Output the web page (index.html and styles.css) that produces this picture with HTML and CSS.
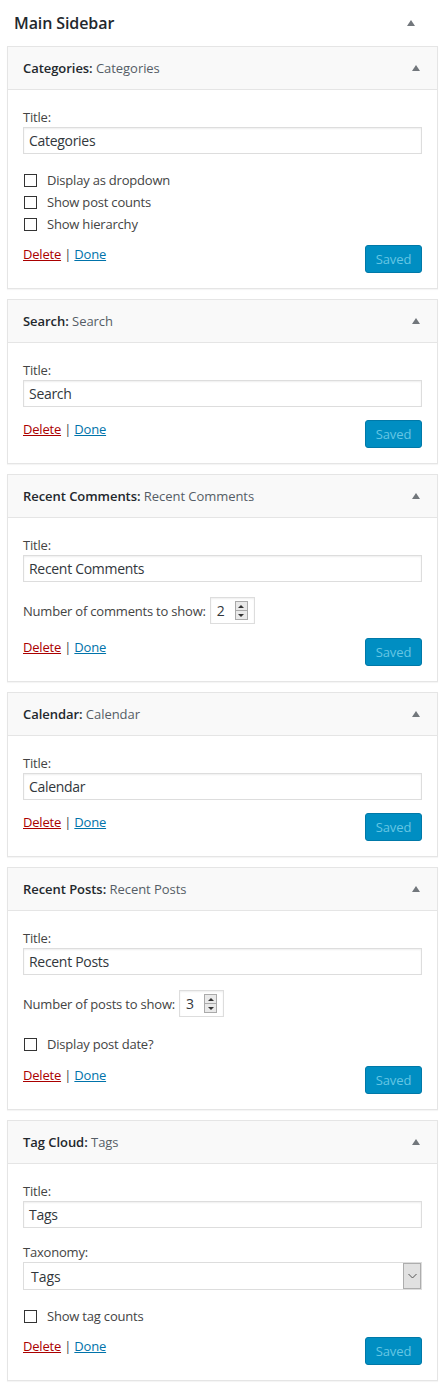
FILE: index.html
```html
<!DOCTYPE html>
<html>
<head>
<meta charset="utf-8">
<link rel="stylesheet" href="styles.css">
</head>
<body>
<div class="sidebar">
  <div class="sidebar-name">
    <h2>Main Sidebar</h2>
    <span class="arrow"></span>
  </div>

  <div class="widget">
    <div class="widget-top"><h3>Categories: <span class="in-title">Categories</span></h3><span class="arrow"></span></div>
    <div class="widget-inside">
      <label class="lbl">Title:</label>
      <div class="text-input">Categories</div>
      <div class="checks">
        <div class="check"><span class="box"></span><span>Display as dropdown</span></div>
        <div class="check"><span class="box"></span><span>Show post counts</span></div>
        <div class="check"><span class="box"></span><span>Show hierarchy</span></div>
      </div>
      <div class="actions after-checks"><div class="links"><a class="del">Delete</a> | <a class="done">Done</a></div><span class="saved">Saved</span></div>
    </div>
  </div>

  <div class="widget">
    <div class="widget-top"><h3>Search: <span class="in-title">Search</span></h3><span class="arrow"></span></div>
    <div class="widget-inside">
      <label class="lbl">Title:</label>
      <div class="text-input">Search</div>
      <div class="actions"><div class="links"><a class="del">Delete</a> | <a class="done">Done</a></div><span class="saved">Saved</span></div>
    </div>
  </div>

  <div class="widget">
    <div class="widget-top"><h3>Recent Comments: <span class="in-title">Recent Comments</span></h3><span class="arrow"></span></div>
    <div class="widget-inside">
      <label class="lbl">Title:</label>
      <div class="text-input">Recent Comments</div>
      <div class="number-row"><span>Number of comments to show:</span><span class="num">2<span class="spin"><span class="up"></span><span class="down"></span></span></span></div>
      <div class="actions after-number"><div class="links"><a class="del">Delete</a> | <a class="done">Done</a></div><span class="saved">Saved</span></div>
    </div>
  </div>

  <div class="widget">
    <div class="widget-top"><h3>Calendar: <span class="in-title">Calendar</span></h3><span class="arrow"></span></div>
    <div class="widget-inside">
      <label class="lbl">Title:</label>
      <div class="text-input">Calendar</div>
      <div class="actions"><div class="links"><a class="del">Delete</a> | <a class="done">Done</a></div><span class="saved">Saved</span></div>
    </div>
  </div>

  <div class="widget">
    <div class="widget-top"><h3>Recent Posts: <span class="in-title">Recent Posts</span></h3><span class="arrow"></span></div>
    <div class="widget-inside">
      <label class="lbl">Title:</label>
      <div class="text-input">Recent Posts</div>
      <div class="number-row"><span>Number of posts to show:</span><span class="num">3<span class="spin"><span class="up"></span><span class="down"></span></span></span></div>
      <div class="checks after-number">
        <div class="check"><span class="box"></span><span>Display post date?</span></div>
      </div>
      <div class="actions after-checks loose"><div class="links"><a class="del">Delete</a> | <a class="done">Done</a></div><span class="saved">Saved</span></div>
    </div>
  </div>

  <div class="widget">
    <div class="widget-top"><h3>Tag Cloud: <span class="in-title">Tags</span></h3><span class="arrow"></span></div>
    <div class="widget-inside">
      <label class="lbl">Title:</label>
      <div class="text-input">Tags</div>
      <label class="lbl second">Taxonomy:</label>
      <div class="select"><span>Tags</span><span class="dd"><svg width="9" height="6" viewBox="0 0 9 6"><path d="M0.5 1 L4.5 5 L8.5 1" fill="none" stroke="#555" stroke-width="1"/></svg></span></div>
      <div class="checks">
        <div class="check"><span class="box"></span><span>Show tag counts</span></div>
      </div>
      <div class="actions after-checks"><div class="links"><a class="del">Delete</a> | <a class="done">Done</a></div><span class="saved">Saved</span></div>
    </div>
  </div>
</div>
</body>
</html>
```

FILE: styles.css
```css
* { box-sizing: border-box; }
html, body { margin: 0; padding: 0; background: #fff; }
body {
  font-family: "Open Sans", "Noto Sans", sans-serif;
  font-size: 13px;
  color: #444;
}
.sidebar { padding: 0 6px 0 7px; }
.sidebar-name {
  display: flex;
  align-items: center;
  justify-content: space-between;
  height: 46px;
  padding: 0 23px 1px 7px;
}
.sidebar-name h2 {
  margin: 0;
  font-size: 16px;
  font-weight: 600;
  color: #23282d;
  letter-spacing: -0.1px;
}
.arrow {
  width: 0; height: 0;
  border-left: 4px solid transparent;
  border-right: 4px solid transparent;
  border-bottom: 6px solid #72777c;
}
.widget {
  border: 1px solid #e5e5e5;
  box-shadow: 0 1px 1px rgba(0,0,0,0.04);
  background: #fff;
  margin-bottom: 10px;
}
.widget-top {
  height: 43px;
  background: #f9f9f9;
  border-bottom: 1px solid #e5e5e5;
  display: flex;
  align-items: center;
  justify-content: space-between;
  padding: 0 17px 0 15px;
}
.widget-top h3 {
  margin: 0;
  font-size: 13px;
  font-weight: 600;
  color: #23282d;
  letter-spacing: -0.05px;
}
.in-title { font-weight: 400; color: #555d66; }
.widget-inside {
  padding: 18px 15px 15px;
  display: flex;
  flex-direction: column;
}
.lbl {
  display: block;
  height: 19px;
  line-height: 18px;
  letter-spacing: -0.2px;
}
.lbl.second { margin-top: 15px; }
.text-input {
  height: 27px;
  border: 1px solid #ddd;
  box-shadow: inset 0 1px 2px rgba(0,0,0,0.07);
  padding: 0 5px;
  font-size: 14px;
  line-height: 25px;
  color: #32373c;
  letter-spacing: -0.3px;
}
.checks { margin-top: 15px; display: flex; flex-direction: column; }
.check {
  height: 22px;
  display: flex;
  align-items: center;
  letter-spacing: -0.2px;
}
.box {
  width: 13px; height: 13px;
  border: 1px solid #333;
  margin: 0 10px 0 1px;
  flex: none;
}
.number-row {
  margin-top: 15px;
  display: flex;
  align-items: center;
  gap: 4px;
  letter-spacing: -0.2px;
}
.num {
  width: 45px; height: 27px;
  border: 1px solid #ddd;
  box-shadow: inset 0 1px 2px rgba(0,0,0,0.07);
  display: flex;
  align-items: center;
  justify-content: space-between;
  padding: 0 6px 0 6px;
  font-size: 14px;
  color: #32373c;
}
.spin {
  display: flex; flex-direction: column;
  width: 13px; height: 19px;
  border: 1px solid #aaa;
  background: #e9e9e9;
}
.spin .up, .spin .down {
  flex: 1;
  display: flex; align-items: center; justify-content: center;
}
.spin .up { border-bottom: 1px solid #aaa; }
.spin .up::after {
  content: ""; width: 0; height: 0;
  border-left: 3px solid transparent; border-right: 3px solid transparent;
  border-bottom: 3px solid #333;
}
.spin .down::after {
  content: ""; width: 0; height: 0;
  border-left: 3px solid transparent; border-right: 3px solid transparent;
  border-top: 3px solid #333;
}
.select {
  height: 28px;
  border: 1px solid #ddd;
  display: flex;
  align-items: center;
  justify-content: space-between;
  padding: 0 0 0 7px;
  font-size: 14px;
  color: #32373c;
}
.dd {
  width: 18px; height: 26px;
  border: 1px solid #adadad;
  background: #e1e1e1;
  display: flex; align-items: center; justify-content: center;
}
.dd svg { display: block; }
.actions {
  margin-top: 13px;
  display: flex;
  justify-content: space-between;
  align-items: flex-start;
}
.actions.after-checks { margin-top: 10px; }
.actions.after-checks.loose { margin-top: 11px; }
.actions.after-number { margin-top: 14px; }
.checks.after-number { margin-top: 16px; }
.links { line-height: 18px; letter-spacing: -0.2px; color: #444; }
.del { color: #a00; text-decoration: underline; }
.done { color: #0073aa; text-decoration: underline; }
.saved {
  width: 57px; height: 28px;
  background: #008ec2;
  border: 1px solid #0079a8;
  border-radius: 3px;
  color: #66c6e4;
  display: flex; align-items: center; justify-content: center;
  font-size: 13px;
  letter-spacing: -0.1px;
}
```
